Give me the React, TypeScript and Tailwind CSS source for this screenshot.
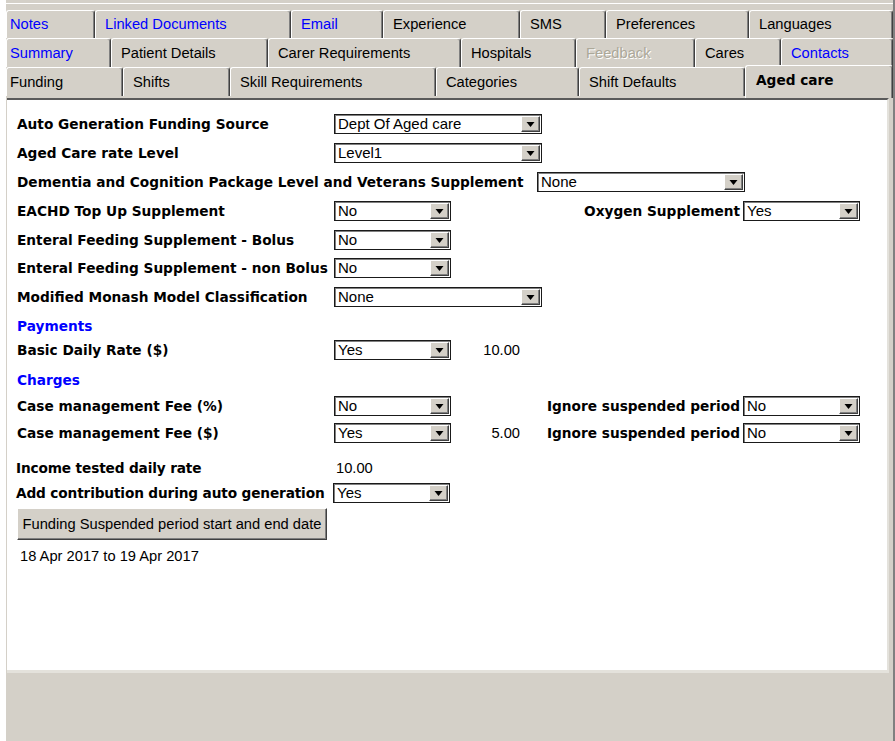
import React from 'react';

type Tab = { label: string; w: string; color?: string; first?: boolean; active?: boolean };

const tabRows: Tab[][] = [
  [
    { label: 'Notes', w: 'w-[89px]', color: 'text-[#0000ff]', first: true },
    { label: 'Linked Documents', w: 'w-[196px]', color: 'text-[#0000ff]' },
    { label: 'Email', w: 'w-[92px]', color: 'text-[#0000ff]' },
    { label: 'Experience', w: 'w-[137px]' },
    { label: 'SMS', w: 'w-[86px]' },
    { label: 'Preferences', w: 'w-[143px]' },
    { label: 'Languages', w: 'w-[144px]' },
  ],
  [
    { label: 'Summary', w: 'w-[105px]', color: 'text-[#0000ff]', first: true },
    { label: 'Patient Details', w: 'w-[157px]' },
    { label: 'Carer Requirements', w: 'w-[193px]' },
    { label: 'Hospitals', w: 'w-[115px]' },
    { label: 'Feedback', w: 'w-[119px]', color: 'text-[#aca899] [text-shadow:1px_1px_0_#ffffff]' },
    { label: 'Cares', w: 'w-[86px]' },
    { label: 'Contacts', w: 'w-[112px]', color: 'text-[#0000ff]' },
  ],
  [
    { label: 'Funding', w: 'w-[117px]', first: true },
    { label: 'Shifts', w: 'w-[107px]' },
    { label: 'Skill Requirements', w: 'w-[206px]' },
    { label: 'Categories', w: 'w-[143px]' },
    { label: 'Shift Defaults', w: 'w-[166px]' },
    { label: 'Aged care', w: 'w-[148px]', active: true },
  ],
];

function TabButton({ tab }: { tab: Tab }) {
  if (tab.active) {
    return (
      <div
        className={`${tab.w} h-[33px] -mt-[2px] relative z-10 bg-[#d4d0c8] flex items-start pt-[5px] pl-[10px] border-t border-l border-white rounded-t-[3px] border-r border-r-[#404040] shadow-[inset_-1px_0_0_#808080] font-['DejaVu_Sans',sans-serif] font-bold text-[13.7px] leading-[18px] text-black`}
      >
        {tab.label}
      </div>
    );
  }
  return (
    <div
      className={`${tab.w} h-full shrink-0 flex items-center ${tab.first ? 'pl-[3px]' : 'pl-[9px]'} border-t border-l border-white rounded-t-[3px] border-r border-r-[#404040] shadow-[inset_-1px_0_0_#808080] whitespace-nowrap ${tab.color ?? 'text-black'}`}
    >
      {tab.label}
    </div>
  );
}

function Select({ w, value }: { w: string; value: string }) {
  return (
    <div
      className={`${w} h-[20px] shrink-0 bg-white border border-[#1a1a1a] shadow-[inset_1px_1px_0_#808080] flex items-center justify-between`}
    >
      <span className="pl-[3px] text-[15px] leading-[18px] whitespace-nowrap">{value}</span>
      <div className="w-[19px] h-[16px] mr-[1px] bg-[#d4d0c8] border border-t-white border-l-white border-r-[#404040] border-b-[#404040] shadow-[inset_-1px_-1px_0_#808080] flex items-center justify-center">
        <svg width="9" height="5" viewBox="0 0 9 5">
          <path d="M0.5 0h8L4.5 5z" fill="#000" />
        </svg>
      </div>
    </div>
  );
}

const label = "font-['DejaVu_Sans',sans-serif] font-bold text-[13.7px] whitespace-nowrap";

function Row({
  mt,
  text,
  children,
  indent,
}: {
  mt: string;
  text: string;
  children?: React.ReactNode;
  indent?: boolean;
}) {
  return (
    <div className={`${mt} h-[20px] flex items-center`}>
      <div className={`w-[317px] shrink-0 ${label} ${indent ? '-ml-[1px] pr-[1px] tracking-[-0.15px]' : ''}`}>{text}</div>
      {children}
    </div>
  );
}

function RightGroup({ text, value }: { text: string; value: string }) {
  return (
    <div className="flex items-center">
      <div className={`w-[220px] text-right ${label}`}>{text}</div>
      <div className="ml-[3px]">
        <Select w="w-[117px]" value={value} />
      </div>
    </div>
  );
}

function Amount({ value }: { value?: string }) {
  return <div className="w-[69px] shrink-0 text-right">{value}</div>;
}

export default function App() {
  return (
    <div className="w-[895px] h-[741px] bg-white pl-[6px] font-['Liberation_Sans',Arial,sans-serif] text-[14.7px] text-black">
      <div className="h-full bg-[#d4d0c8] border-r-2 border-r-[#808080] flex flex-col">
        <div className="h-[3px]" />
        <div className="h-[1px] bg-white" />
        <div className="h-[6px]" />

        <div className="h-[28px] flex">
          {tabRows[0].map((t) => (
            <TabButton key={t.label} tab={t} />
          ))}
        </div>
        <div className="h-[29px] flex">
          {tabRows[1].map((t) => (
            <TabButton key={t.label} tab={t} />
          ))}
        </div>
        <div className="h-[29px] flex items-start">
          {tabRows[2].map((t) => (
            <TabButton key={t.label} tab={t} />
          ))}
        </div>

        <div className="pt-[2px] pl-[1px] pr-[4px]">
          <div className="h-[575px] bg-white border-t-2 border-t-[#5a5a5a] border-r-2 border-r-[#e4e2dc] border-b-[3px] border-b-[#e4e2dc] pl-[10px] flex flex-col">
            <Row mt="mt-[14px]" text="Auto Generation Funding Source">
              <Select w="w-[208px]" value="Dept Of Aged care" />
            </Row>
            <Row mt="mt-[9px]" text="Aged Care rate Level">
              <Select w="w-[208px]" value="Level1" />
            </Row>
            <div className="mt-[9px] h-[20px] flex items-center">
              <div className={`w-[520px] shrink-0 ${label}`}>
                Dementia and Cognition Package Level and Veterans Supplement
              </div>
              <Select w="w-[208px]" value="None" />
            </div>
            <Row mt="mt-[9px]" text="EACHD Top Up Supplement">
              <Select w="w-[117px]" value="No" />
              <Amount />
              <RightGroup text="Oxygen Supplement" value="Yes" />
            </Row>
            <Row mt="mt-[9px]" text="Enteral Feeding Supplement - Bolus">
              <Select w="w-[117px]" value="No" />
            </Row>
            <Row mt="mt-[8px]" text="Enteral Feeding Supplement - non Bolus">
              <Select w="w-[117px]" value="No" />
            </Row>
            <Row mt="mt-[9px]" text="Modified Monash Model Classification">
              <Select w="w-[208px]" value="None" />
            </Row>

            <div className={`mt-[9px] h-[20px] flex items-center ${label} text-[#0000ff]`}>Payments</div>
            <Row mt="mt-[4px]" text="Basic Daily Rate ($)">
              <Select w="w-[117px]" value="Yes" />
              <Amount value="10.00" />
            </Row>

            <div className={`mt-[10px] h-[20px] flex items-center ${label} text-[#0000ff]`}>Charges</div>
            <Row mt="mt-[6px]" text="Case management Fee (%)">
              <Select w="w-[117px]" value="No" />
              <Amount />
              <RightGroup text="Ignore suspended period" value="No" />
            </Row>
            <Row mt="mt-[7px]" text="Case management Fee ($)">
              <Select w="w-[117px]" value="Yes" />
              <Amount value="5.00" />
              <RightGroup text="Ignore suspended period" value="No" />
            </Row>

            <Row mt="mt-[15px]" text="Income tested daily rate" indent>
              <span className="pl-[3px]">10.00</span>
            </Row>
            <Row mt="mt-[5px]" text="Add contribution during auto generation" indent>
              <Select w="w-[117px]" value="Yes" />
            </Row>

            <button className="mt-[5px] w-[310px] h-[32px] bg-[#d4d0c8] border border-t-white border-l-white border-r-[#404040] border-b-[#404040] shadow-[inset_-1px_-1px_0_#808080] text-[14.7px] text-black">
              Funding Suspended period start and end date
            </button>
            <div className="mt-[6px] h-[20px] flex items-center pl-[3px]">18 Apr 2017 to 19 Apr 2017</div>
          </div>
        </div>
        <div className="flex-1" />
      </div>
    </div>
  );
}
